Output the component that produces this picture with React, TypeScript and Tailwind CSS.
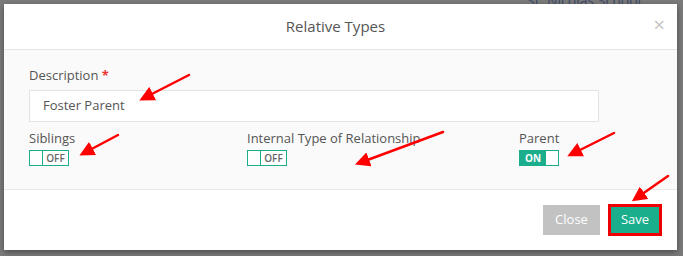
function Toggle({ on }: { on: boolean }) {
  if (on) {
    return (
      <div className="flex h-[16px] w-[40px] border border-[#1aae8c] bg-[#1aae8c]">
        <span className="flex w-[26px] items-center justify-center text-[10px] font-bold leading-none text-white">ON</span>
        <span className="flex-1 bg-white" />
      </div>
    )
  }
  return (
    <div className="flex h-[16px] w-[40px] border border-[#1aae8c] bg-white">
      <span className="w-[13px] border-r border-[#1aae8c]" />
      <span className="flex flex-1 items-center justify-center text-[10px] font-semibold leading-none text-[#666]">OFF</span>
    </div>
  )
}

export default function App() {
  return (
    <div
      className="relative h-[256px] w-[683px] overflow-hidden bg-[#7b7b7b] pt-[4px] pl-[4px]"
      style={{ fontFamily: '"Open Sans", sans-serif' }}
    >
      <div className="absolute left-[527px] top-[-10px] text-[14px] text-[#3b4a6b]">St. Nicolas School</div>

      {/* Modal */}
      <div className="relative w-[673px] bg-white shadow-[0_2px_6px_rgba(0,0,0,0.4)]">
        {/* Header */}
        <div className="relative flex h-[46px] items-center justify-center border-b border-[#e5e5e5] pr-[10px]">
          <h2 className="text-[15px] text-[#555]">Relative Types</h2>
          <span className="absolute right-[12px] top-[11px] text-[20px] leading-none text-[#c4c4c4]">×</span>
        </div>

        {/* Body */}
        <div className="h-[140px] border-b border-[#e8e8e8] bg-[#fafafa] px-[25px] pt-[16px]">
          <label className="block text-[13px] text-[#555]">
            Description <span className="font-bold text-[#e33]">*</span>
          </label>
          <div className="mt-[4px] flex h-[32px] w-[570px] items-center border border-[#e3e3e3] bg-white px-[13px] text-[13px] text-[#555]">
            Foster Parent
          </div>
          <div className="mt-[7px] grid grid-cols-[218px_272px_1fr]">
            <div>
              <div className="text-[13px] text-[#555]">Siblings</div>
              <div className="mt-[2px]"><Toggle on={false} /></div>
            </div>
            <div>
              <div className="text-[13px] text-[#555]">Internal Type of Relationship</div>
              <div className="mt-[2px]"><Toggle on={false} /></div>
            </div>
            <div>
              <div className="text-[13px] text-[#555]">Parent</div>
              <div className="mt-[2px]"><Toggle on={true} /></div>
            </div>
          </div>
        </div>

        {/* Footer */}
        <div className="flex h-[60px] items-center justify-end gap-[8px] pr-[15px]">
          <button className="h-[30px] w-[57px] bg-[#c2c2c2] text-[13px] text-white">Close</button>
          <button className="h-[32px] w-[54px] border-[3px] border-[#ee0000] bg-[#1aae8c] text-[13px] text-white">Save</button>
        </div>
      </div>

      {/* Annotation arrows */}
      <svg className="pointer-events-none absolute left-0 top-0" width="683" height="256">
        <defs>
          <marker id="ah" markerWidth="6" markerHeight="6" refX="3" refY="3" orient="auto" markerUnits="strokeWidth">
            <path d="M0,0 L6,3 L0,6 z" fill="#f00" />
          </marker>
        </defs>
        <g stroke="#f00" strokeWidth="2.5" strokeLinecap="round" markerEnd="url(#ah)">
          <line x1="189" y1="75" x2="146" y2="97" />
          <line x1="118" y1="135" x2="86" y2="152" />
          <line x1="443" y1="132" x2="362" y2="162" />
          <line x1="614" y1="133" x2="574" y2="153" />
          <line x1="668" y1="176" x2="638" y2="197" />
        </g>
      </svg>
    </div>
  )
}
